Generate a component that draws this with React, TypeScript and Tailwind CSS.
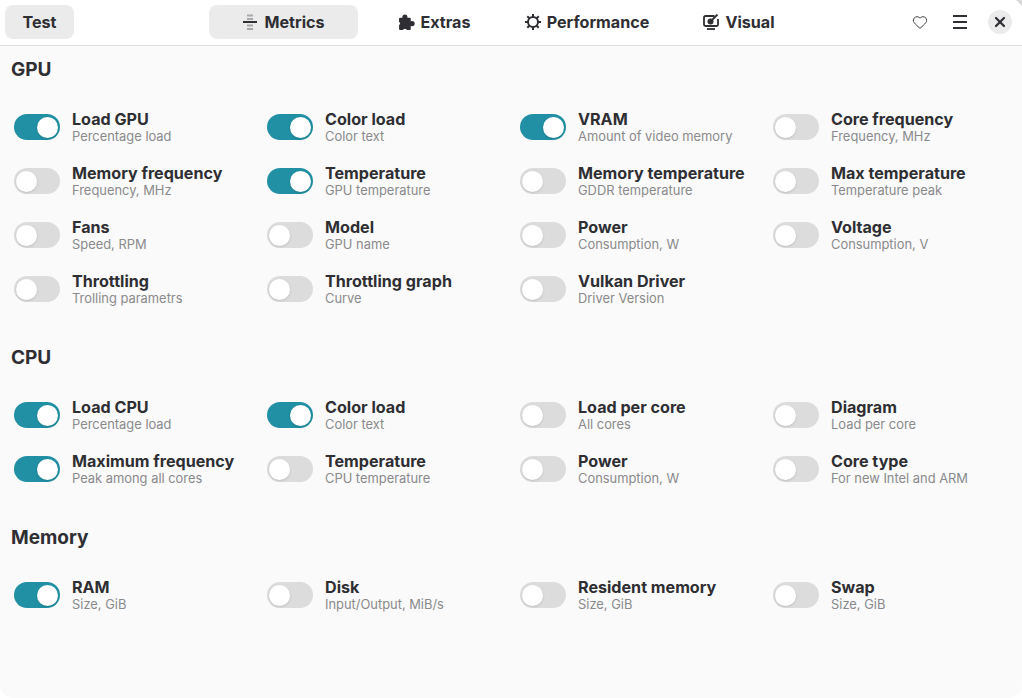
import { Heart, X } from 'lucide-react'

interface Metric {
  title: string
  sub: string
  on?: boolean
}

const gpu: Metric[] = [
  { title: 'Load GPU', sub: 'Percentage load', on: true },
  { title: 'Color load', sub: 'Color text', on: true },
  { title: 'VRAM', sub: 'Amount of video memory', on: true },
  { title: 'Core frequency', sub: 'Frequency, MHz' },
  { title: 'Memory frequency', sub: 'Frequency, MHz' },
  { title: 'Temperature', sub: 'GPU temperature', on: true },
  { title: 'Memory temperature', sub: 'GDDR temperature' },
  { title: 'Max temperature', sub: 'Temperature peak' },
  { title: 'Fans', sub: 'Speed, RPM' },
  { title: 'Model', sub: 'GPU name' },
  { title: 'Power', sub: 'Consumption, W' },
  { title: 'Voltage', sub: 'Consumption, V' },
  { title: 'Throttling', sub: 'Trolling parametrs' },
  { title: 'Throttling graph', sub: 'Curve' },
  { title: 'Vulkan Driver', sub: 'Driver Version' },
]

const cpu: Metric[] = [
  { title: 'Load CPU', sub: 'Percentage load', on: true },
  { title: 'Color load', sub: 'Color text', on: true },
  { title: 'Load per core', sub: 'All cores' },
  { title: 'Diagram', sub: 'Load per core' },
  { title: 'Maximum frequency', sub: 'Peak among all cores', on: true },
  { title: 'Temperature', sub: 'CPU temperature' },
  { title: 'Power', sub: 'Consumption, W' },
  { title: 'Core type', sub: 'For new Intel and ARM' },
]

const memory: Metric[] = [
  { title: 'RAM', sub: 'Size, GiB', on: true },
  { title: 'Disk', sub: 'Input/Output, MiB/s' },
  { title: 'Resident memory', sub: 'Size, GiB' },
  { title: 'Swap', sub: 'Size, GiB' },
]

function Toggle({ on }: { on?: boolean }) {
  return (
    <div className={`flex h-[26px] w-[46px] shrink-0 items-center rounded-full px-[2px] ${on ? 'justify-end bg-[#2190a4]' : 'justify-start bg-[#dcdcdc]'}`}>
      <div className="h-[21px] w-[21px] rounded-full bg-white shadow-sm" />
    </div>
  )
}

function Row({ title, sub, on }: Metric) {
  return (
    <div className="flex h-[54px] items-center gap-3">
      <Toggle on={on} />
      <div className="flex flex-col pt-[1px]">
        <span className="text-[16.13px] leading-[18px] font-bold text-[#2e2e33]">{title}</span>
        <span className="mt-[1px] text-[12.9px] leading-[16px] text-[#8a8a8c]">{sub}</span>
      </div>
    </div>
  )
}

function Section({ name, items, className }: { name: string; items: Metric[]; className: string }) {
  return (
    <section className={className}>
      <h2 className="h-[24px] pl-[11px] text-[19px] leading-[24px] font-bold text-[#2e2e33]">{name}</h2>
      <div className="mt-[18px] grid grid-cols-[253px_253px_253px_253px] pl-[14px]">
        {items.map((m) => (
          <Row key={m.title + m.sub} {...m} />
        ))}
      </div>
    </section>
  )
}

function MetricsIcon() {
  return (
    <svg width="16" height="16" viewBox="0 0 16 16" className="shrink-0">
      <rect x="5" y="0.500" width="6" height="2" fill="#a8a8a8" />
      <rect x="5" y="4" width="6" height="2" fill="#a8a8a8" />
      <rect x="1" y="7" width="14" height="2" fill="#2e2e33" />
      <rect x="5" y="10.500" width="6" height="2" fill="#a8a8a8" />
      <rect x="5" y="14" width="6" height="2" fill="#a8a8a8" />
    </svg>
  )
}

function PuzzleIcon() {
  return (
    <svg width="17" height="17" viewBox="0 0 16 16" className="shrink-0">
      <rect x="1" y="3.500" width="11" height="11.500" rx="1" fill="#2e2e33" />
      <circle cx="6.500" cy="2.800" r="2.400" fill="#2e2e33" />
      <circle cx="13.200" cy="9" r="2.500" fill="#2e2e33" />
      <circle cx="6.500" cy="15.800" r="2" fill="#ffffff" />
      <circle cx="0.300" cy="9" r="1.600" fill="#ffffff" />
    </svg>
  )
}

function GearIcon() {
  return (
    <svg width="16" height="16" viewBox="0 0 16 16" fill="none" stroke="#2e2e33" className="shrink-0">
      <circle cx="8" cy="8" r="5" strokeWidth="2" />
      <path d="M8 0v3M8 13v3M0 8h3M13 8h3M2.300 2.300l2 2M11.700 11.700l2 2M2.300 13.700l2-2M11.700 4.300l2-2" strokeWidth="2" />
    </svg>
  )
}

function VisualIcon() {
  return (
    <svg width="16" height="16" viewBox="0 0 16 16" fill="none" className="shrink-0">
      <path d="M11.500 2H2.500A1.500 1.500 0 0 0 1 3.500v7A1.500 1.500 0 0 0 2.500 12h11a1.500 1.500 0 0 0 1.500-1.500V5" stroke="#2e2e33" strokeWidth="1.800" />
      <circle cx="7.500" cy="7.500" r="3" fill="#2e2e33" />
      <path d="M8.500 6.500l6-6" stroke="#2e2e33" strokeWidth="1.800" />
      <path d="M4 15h8" stroke="#2e2e33" strokeWidth="1.800" />
    </svg>
  )
}

function MenuIcon() {
  return (
    <svg width="14" height="14" viewBox="0 0 14 14" className="shrink-0">
      <rect y="0" width="14" height="2" fill="#2e2e33" />
      <rect y="6" width="14" height="2" fill="#2e2e33" />
      <rect y="12" width="14" height="2" fill="#2e2e33" />
    </svg>
  )
}

function Tab({ icon, label, className }: { icon: React.ReactNode; label: string; className: string }) {
  return (
    <div className={`flex h-[34px] items-center justify-center gap-[6px] rounded-lg text-[16.13px] font-bold text-[#2e2e33] ${className}`}>
      {icon}
      <span>{label}</span>
    </div>
  )
}

export default function App() {
  return (
    <div className="relative h-[698px] w-[1022px] overflow-hidden bg-white font-['Inter',sans-serif]">
      {/* window corner peeking through at the top right */}
      <svg width="6" height="6" viewBox="0 0 6 6" className="absolute right-0 top-0">
        <path d="M0 0h6v6z" fill="#d9d9d9" />
      </svg>
      <header className="flex h-[46px] items-center border-b border-[#dedede] pb-[1px] pl-[5px] pr-[10px]">
        <div className="flex h-[34px] w-[69px] items-center justify-center rounded-lg bg-[#ebebeb] text-[16.13px] font-bold text-[#2e2e33]">
          Test
        </div>
        <nav className="ml-[135px] flex items-center">
          <Tab icon={<MetricsIcon />} label="Metrics" className="w-[149px] bg-[#ebebeb]" />
          <Tab icon={<PuzzleIcon />} label="Extras" className="ml-[39px] w-[74px]" />
          <Tab icon={<GearIcon />} label="Performance" className="ml-[53px] w-[126px]" />
          <Tab icon={<VisualIcon />} label="Visual" className="ml-[52px] w-[74px]" />
        </nav>
        <div className="ml-auto flex items-center">
          <Heart size={16} stroke="#444444" strokeWidth={1.500} />
          <div className="ml-[25px]">
            <MenuIcon />
          </div>
          <div className="ml-[21px] flex h-[24px] w-[24px] items-center justify-center rounded-full bg-[#ebebeb]">
            <X size={16} stroke="#2e2e33" strokeWidth={3.300} />
          </div>
        </div>
      </header>
      <main className="h-[652px] rounded-b-[14px] bg-[#fafafa] pt-[12px]">
        <Section name="GPU" items={gpu} className="" />
        <Section name="CPU" items={cpu} className="mt-[30px]" />
        <Section name="Memory" items={memory} className="mt-[30px]" />
      </main>
    </div>
  )
}
